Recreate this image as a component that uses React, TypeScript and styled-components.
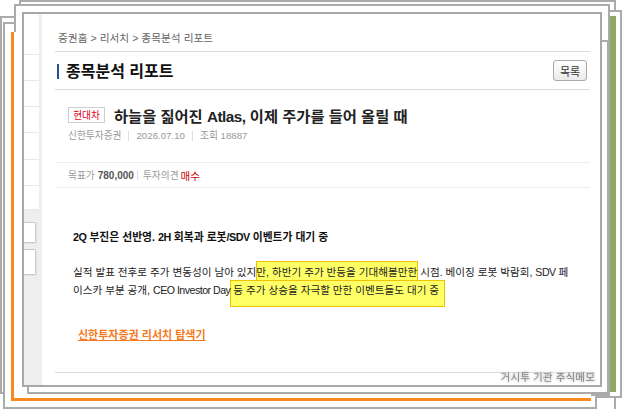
import { createGlobalStyle, styled } from 'styled-components'

const Global = createGlobalStyle`
  html, body { margin: 0; padding: 0; background: #fff; }
  body { font-family: "Liberation Sans", "Noto Sans CJK KR", sans-serif; color: #222; }
  * { box-sizing: border-box; }
`

function App() {
  return (
    <Desk>
      <Global />
      <Sheet $x={19} $y={0} $w={597} $h={440} />
      <GreenSheet>
        <Stripe />
      </GreenSheet>
      <Sheet $x={0} $y={16} $w={560} $h={378} />
      <Sheet $x={3} $y={22} $w={594} $h={387} />
      <Sheet $x={14} $y={4} $w={596} $h={392} />
      <OrangeSheet />
      <Sheet $x={27} $y={40} $w={582} $h={354} />

      <MainWindow>
        <Sidebar>
          <SideNav>
            {[41, 26, 26, 26, 27, 26, 24].map((h, i) => (
              <SideRow key={i} $h={h} />
            ))}
          </SideNav>
          <SideTabs>
            <SideTab $h={21} />
            <SideTab $h={26} />
          </SideTabs>
        </Sidebar>

        <Content>
          <Breadcrumb>증권홈 &gt; 리서치 &gt; 종목분석 리포트</Breadcrumb>

          <TitleRow>
            <PageTitle>종목분석 리포트</PageTitle>
            <ListButton>목록</ListButton>
          </TitleRow>

          <ArticleHead>
            <Headline>
              <Badge>현대차</Badge>
              <HeadText>
                하늘을 짊어진 <En>Atlas,</En> 이제 주가를 들어 올릴 때
              </HeadText>
            </Headline>
            <Meta>
              <span>신한투자증권</span>
              <Sep />
              <span>2026.07.10</span>
              <Sep />
              <span>조회 18887</span>
            </Meta>
          </ArticleHead>

          <TargetRow>
            <Label>목표가</Label>
            <Price>780,000</Price>
            <Sep $tight />
            <Label>투자의견</Label>
            <Opinion>매수</Opinion>
          </TargetRow>

          <Body>
            <BodyTitle>
              <En>2Q</En> 부진은 선반영. <En>2H</En> 회복과 로봇<En>/SDV</En> 이벤트가 대기 중
            </BodyTitle>
            <Para>
              <Line>
                실적 발표 전후로 주가 변동성이 남아 있지<Mark $v="a">만, 하반기 주가 반등을 기대해볼만한</Mark> 시점. 베이징 로봇 박람회, <En>SDV</En> 페
              </Line>
              <Line>
                이스카 부분 공개, <En>CEO Investor Day</En> <Mark $v="b">등 주가 상승을 자극할 만한 이벤트들도 대기 중</Mark>
              </Line>
            </Para>
            <ResearchLink href="#">신한투자증권 리서치 탐색기</ResearchLink>
          </Body>

          <Footer>
            <Watermark>거시투 기관 주식메모</Watermark>
          </Footer>
        </Content>
      </MainWindow>
    </Desk>
  )
}
export default App

const Desk = styled.div`
  position: relative;
  width: 622px;
  height: 409px;
  overflow: hidden;
  background: #fff;
`

const Sheet = styled.div<{ $x: number; $y: number; $w: number; $h: number }>`
  position: absolute;
  left: ${(p) => p.$x}px;
  top: ${(p) => p.$y}px;
  width: ${(p) => p.$w}px;
  height: ${(p) => p.$h}px;
  background: #fff;
  border: 2px solid #ababab;
`

const GreenSheet = styled.div`
  position: absolute;
  left: 200px;
  top: 10px;
  width: 422px;
  height: 388px;
  background: #fff;
  border: 2px solid #ababab;
  display: flex;
  justify-content: flex-end;
  padding: 4px 4px 4px 0;
`

const Stripe = styled.div`
  width: 6px;
  background: #8fa866;
`

const OrangeSheet = styled.div`
  position: absolute;
  left: 11px;
  top: 32px;
  width: 580px;
  height: 369px;
  background: #fff;
  border-left: 3px solid #f7891f;
  border-bottom: 3px solid #f7891f;
`

const MainWindow = styled.div`
  position: absolute;
  left: 22px;
  top: 12px;
  width: 580px;
  height: 375px;
  background: #fff;
  border: 2px solid #a8a8a8;
  display: flex;
`

const Sidebar = styled.div`
  width: 18px;
  flex: none;
  display: flex;
  flex-direction: column;
  background: #eee;
`

const SideNav = styled.div`
  background: #fff;
  border-right: 3px solid #eee;
  height: 196px;
`

const SideRow = styled.div<{ $h: number }>`
  height: ${(p) => p.$h}px;
  border-bottom: 1px solid #e8e8e8;
`

const SideTabs = styled.div`
  display: flex;
  flex-direction: column;
  gap: 6px;
  padding-top: 12px;
`

const SideTab = styled.div<{ $h: number }>`
  width: 12px;
  height: ${(p) => p.$h}px;
  background: #fff;
  border: 1px solid #c9c9c9;
  border-left: none;
  border-radius: 0 2px 2px 0;
  box-shadow: 1px 1px 1px rgba(0, 0, 0, 0.06);
`

const Content = styled.div`
  flex: 1;
  display: flex;
  flex-direction: column;
  padding: 0 10px 0 13px;
`

const En = styled.span`
  letter-spacing: -0.5px;
`

const Breadcrumb = styled.div`
  height: 38px;
  padding: 18px 0 0 3px;
  font-size: 10.7px;
  line-height: 12px;
  color: #666;
  border-bottom: 1px solid #dcdcdc;
`

const TitleRow = styled.div`
  height: 38px;
  display: flex;
  align-items: center;
  justify-content: space-between;
  border-bottom: 1px solid #dcdcdc;
`

const PageTitle = styled.h2`
  margin: 2px 0 0 2px;
  padding-left: 7px;
  border-left: 2px solid #1f4f9e;
  font-size: 16px;
  line-height: 15px;
  font-weight: 700;
  color: #111;
`

const ListButton = styled.button`
  width: 34px;
  height: 21px;
  margin-right: 3px;
  padding: 0;
  border: 1px solid #a9a9a9;
  border-radius: 3px;
  background: linear-gradient(#fff, #ebebeb);
  font-family: inherit;
  font-size: 11px;
  color: #333;
`

const ArticleHead = styled.div`
  height: 73px;
  padding: 17px 0 0 13px;
  border-bottom: 1px solid #ececec;
`

const Headline = styled.div`
  display: flex;
  align-items: center;
  height: 16px;
  gap: 9px;
`

const Badge = styled.span`
  width: 37px;
  height: 16px;
  border: 1px solid #cfcfcf;
  display: flex;
  align-items: center;
  justify-content: center;
  font-size: 9.7px;
  color: #e2001a;
`

const HeadText = styled.span`
  font-size: 15.3px;
  font-weight: 700;
  color: #222;
  white-space: nowrap;
`

const Meta = styled.div`
  margin-top: 7px;
  display: flex;
  align-items: center;
  font-size: 9.7px;
  line-height: 12px;
  color: #999;
`

const Sep = styled.i<{ $tight?: boolean }>`
  width: 1px;
  height: 10px;
  background: #ddd;
  margin: ${(p) => (p.$tight ? '0 5px 0 3px' : '0 7px')};
`

const TargetRow = styled.div`
  height: 25px;
  padding-left: 13px;
  display: flex;
  align-items: center;
  border-bottom: 1px solid #ececec;
  font-size: 9.7px;
  color: #999;
`

const Label = styled.span``

const Price = styled.span`
  margin-left: 3px;
  font-size: 10px;
  font-weight: 700;
  color: #555;
`

const Opinion = styled.span`
  margin-left: 2px;
  font-size: 10.5px;
  color: #cc0000;
`

const Body = styled.div`
  flex: 1;
  padding: 42px 0 0 18px;
`

const BodyTitle = styled.div`
  font-size: 10.8px;
  line-height: 14px;
  font-weight: 700;
  color: #111;
`

const Para = styled.div`
  position: relative;
  z-index: 0;
  margin-top: 19px;
  font-size: 10.6px;
  line-height: 18px;
  color: #222;
`

const Line = styled.div`
  white-space: nowrap;
`

const Mark = styled.span<{ $v: 'a' | 'b' }>`
  position: relative;
  display: inline-block;
  &::before {
    content: '';
    position: absolute;
    z-index: -1;
    background: #ffff66;
    border: 1px solid #f0c200;
    ${(p) =>
      p.$v === 'a'
        ? 'top: -2px; bottom: -1px; left: 0; right: -1px;'
        : 'top: -1px; bottom: -8px; left: -3px; right: -6px;'}
  }
`

const ResearchLink = styled.a`
  display: inline-block;
  margin: 29px 0 0 5px;
  font-size: 11px;
  line-height: 14px;
  font-weight: 700;
  color: #f47a1f;
  text-decoration: underline;
`

const Footer = styled.div`
  height: 13px;
  border-top: 1px solid #dcdcdc;
  display: flex;
  justify-content: flex-end;
  margin-right: -5px;
`

const Watermark = styled.span`
  margin-top: -2px;
  font-size: 10.7px;
  line-height: 12px;
  color: #8a8a8a;
  text-shadow: 0 0 3px rgba(0, 0, 0, 0.4);
  filter: blur(0.4px);
  white-space: nowrap;
`
